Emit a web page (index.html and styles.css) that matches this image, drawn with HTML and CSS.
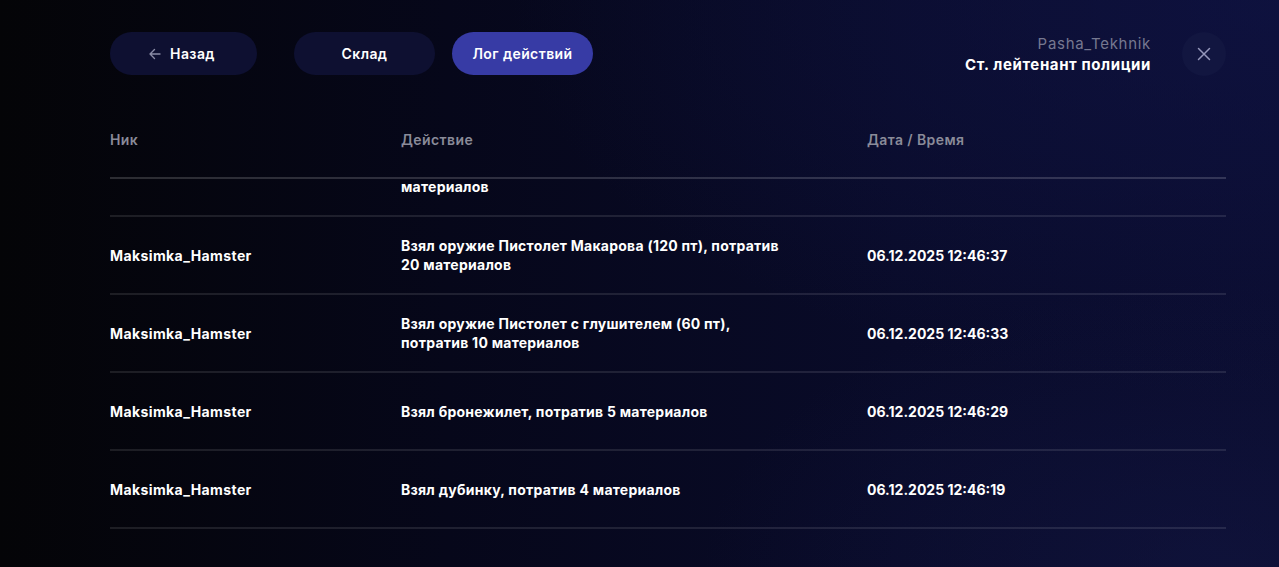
FILE: index.html
```html
<!DOCTYPE html>
<html lang="ru">
<head>
<meta charset="utf-8">
<title>Лог действий</title>
<link rel="stylesheet" href="styles.css">
</head>
<body>
<div class="page">
  <header class="topbar">
    <nav class="tabs">
      <button class="btn btn-back">
        <svg class="arrow" width="14" height="14" viewBox="0 0 14 14" fill="none"><path d="M12 7H2M6.5 2.5L2 7l4.5 4.5" stroke="currentColor" stroke-width="1.4" stroke-linecap="round" stroke-linejoin="round"/></svg>
        <span>Назад</span>
      </button>
      <button class="btn btn-tab">Склад</button>
      <button class="btn btn-tab active">Лог действий</button>
    </nav>
    <div class="user">
      <div class="user-info">
        <div class="user-name">Pasha_Tekhnik</div>
        <div class="user-rank">Ст. лейтенант полиции</div>
      </div>
      <button class="close">
        <svg width="16" height="16" viewBox="0 0 16 16" fill="none"><path d="M2.5 2.5l11 11M13.5 2.5l-11 11" stroke="currentColor" stroke-width="1.5" stroke-linecap="round"/></svg>
      </button>
    </div>
  </header>

  <section class="table">
    <div class="thead">
      <div class="c-nick">Ник</div>
      <div class="c-act">Действие</div>
      <div class="c-date">Дата / Время</div>
    </div>
    <div class="tbody">
      <div class="rows">
        <div class="row">
          <div class="c-nick">Maksimka_Hamster</div>
          <div class="c-act"><span class="act">Взял оружие Штурмовая винтовка<br>Калашникова (250 пт), потратив 30<br>материалов</span></div>
          <div class="c-date">06.12.2025 12:46:41</div>
        </div>
        <div class="row">
          <div class="c-nick">Maksimka_Hamster</div>
          <div class="c-act"><span class="act">Взял оружие Пистолет Макарова (120 пт), потратив 20 материалов</span></div>
          <div class="c-date">06.12.2025 12:46:37</div>
        </div>
        <div class="row">
          <div class="c-nick">Maksimka_Hamster</div>
          <div class="c-act"><span class="act">Взял оружие Пистолет с глушителем (60 пт), потратив 10 материалов</span></div>
          <div class="c-date">06.12.2025 12:46:33</div>
        </div>
        <div class="row">
          <div class="c-nick">Maksimka_Hamster</div>
          <div class="c-act"><span class="act">Взял бронежилет, потратив 5 материалов</span></div>
          <div class="c-date">06.12.2025 12:46:29</div>
        </div>
        <div class="row">
          <div class="c-nick">Maksimka_Hamster</div>
          <div class="c-act"><span class="act">Взял дубинку, потратив 4 материалов</span></div>
          <div class="c-date">06.12.2025 12:46:19</div>
        </div>
      </div>
    </div>
  </section>
</div>
</body>
</html>
```

FILE: styles.css
```css
* { box-sizing: border-box; }
html, body {
  margin: 0;
  height: 100%;
}
body {
  font-family: "Inter", "Noto Sans", sans-serif;
  color: #fff;
  overflow: hidden;
  background:
    radial-gradient(ellipse 60% 70% at 100% 0%, rgba(16, 20, 70, 0.65) 0%, rgba(16, 20, 70, 0) 100%),
    radial-gradient(ellipse 40% 50% at 95% 100%, rgba(20, 24, 70, 0.45) 0%, rgba(20, 24, 70, 0) 100%),
    linear-gradient(90deg, #040407 0%, #06071a 35%, #090b29 70%, #0b0d30 100%);
}
.page {
  padding: 32px 53px 0 110px;
  height: 100%;
  display: flex;
  flex-direction: column;
}
.topbar {
  display: flex;
  justify-content: space-between;
  align-items: flex-start;
  height: 43px;
}
.tabs {
  display: flex;
  gap: 17px;
}
.btn {
  height: 43px;
  border: none;
  border-radius: 22px;
  background: #0e1031;
  color: #fff;
  font-family: inherit;
  font-size: 14px;
  font-weight: 600;
  letter-spacing: 0.4px;
  display: flex;
  align-items: center;
  justify-content: center;
  gap: 8px;
  padding: 0;
  cursor: pointer;
}
.btn-back {
  width: 147px;
  margin-right: 20px;
}
.btn-back .arrow {
  color: #8a8ca6;
  margin-left: -4px;
}
.btn-tab {
  width: 141px;
}
.btn-tab.active {
  background: #373ba5;
}
.user {
  display: flex;
  align-items: center;
  gap: 31px;
}
.user-info {
  text-align: right;
  padding-top: 1px;
}
.user-name {
  color: #767890;
  font-size: 15px;
  font-weight: 400;
  line-height: 20px;
  letter-spacing: 0.7px;
}
.user-rank {
  font-size: 15px;
  font-weight: 700;
  line-height: 22px;
  letter-spacing: 0.6px;
}
.close {
  width: 44px;
  height: 44px;
  border-radius: 50%;
  border: none;
  background: #121640;
  color: #9597bb;
  display: flex;
  align-items: center;
  justify-content: center;
  padding: 0;
}
.table {
  margin-top: 43px;
  flex: 1;
  display: flex;
  flex-direction: column;
  min-height: 0;
}
.thead, .row {
  display: grid;
  grid-template-columns: 291px 466px 1fr;
  align-items: center;
  font-size: 14px;
  font-weight: 700;
  letter-spacing: 0.4px;
}
.thead {
  height: 61px;
  color: #8a8b99;
  font-weight: 600;
  border-bottom: 2px solid rgba(255, 255, 255, 0.16);
  padding-bottom: 16px;
}
.tbody {
  overflow: hidden;
  height: 352px;
}
.rows {
  margin-top: -59px;
}
.row {
  min-height: 78px;
  padding: 19px 0;
  border-bottom: 2px solid rgba(255, 255, 255, 0.1);
  line-height: 19px;
}
.row .c-date {
  letter-spacing: 0;
}
.act {
  display: block;
  max-width: 390px;
  letter-spacing: 0.25px;
}
```
